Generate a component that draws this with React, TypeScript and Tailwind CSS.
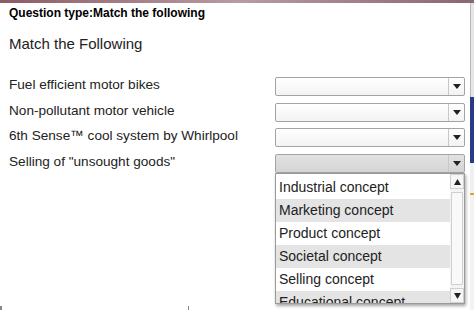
import React from "react";

const labels = [
  "Fuel efficient motor bikes",
  "Non-pollutant motor vehicle",
  "6th Sense™ cool system by Whirlpool",
  'Selling of "unsought goods"',
];

const options = [
  "Industrial concept",
  "Marketing concept",
  "Product concept",
  "Societal concept",
  "Selling concept",
  "Educational concept",
];

function Caret() {
  return (
    <svg width="8" height="5" viewBox="0 0 8 5">
      <path d="M0 0h8L4 5z" fill="#222" />
    </svg>
  );
}

function Select({ active }: { active?: boolean }) {
  return (
    <div
      className={`flex h-[19px] w-[190px] rounded-[2px] border border-[#a3a3a3] ${
        active ? "bg-gradient-to-b from-[#e2e2e2] to-[#d4d4d4]" : "bg-gradient-to-b from-white to-[#f3f3f3]"
      }`}
    >
      <div className="flex-1" />
      <div className="flex w-[16px] items-center justify-center border-l border-[#c8c8c8]">
        <Caret />
      </div>
    </div>
  );
}

function ScrollArrow({ up }: { up?: boolean }) {
  return (
    <div className="flex h-[15px] items-center justify-center border border-[#d0d0d0] bg-[#f6f6f6]">
      <svg width="7" height="6" viewBox="0 0 7 6">
        <path d={up ? "M0 6h7L3.5 0z" : "M0 0h7L3.5 6z"} fill="#222" />
      </svg>
    </div>
  );
}

export default function App() {
  return (
    <div
      className="relative h-[310px] w-[474px] overflow-hidden bg-white text-[#222]"
      style={{ fontFamily: '"Liberation Sans", Arial, sans-serif' }}
    >
      <div className="h-[3px] bg-gradient-to-r from-[#8c5c66] via-[#b89ca2] to-[#8c6670]" />

      <div className="pl-[9px] pt-[3px] text-[12px] font-bold leading-[14px] text-black">
        Question type:Match the following
      </div>
      <div className="pl-[9px] pt-[15px] text-[15px] leading-[17px]">Match the Following</div>

      <div className="mt-[25px] flex flex-col gap-[6.5px] pl-[9px]">
        {labels.map((l, i) => (
          <div key={i} className="flex items-start">
            <div className="-mt-[1px] w-[266px] text-[13.6px] leading-[17px]">{l}</div>
            <Select active={i === 3} />
          </div>
        ))}
      </div>

      <div className="absolute left-[275px] top-[173px] flex h-[131px] w-[190px] border border-[#9a9a9a] bg-white shadow-[1px_2px_3px_rgba(0,0,0,0.35)]">
        <div className="flex-1 overflow-hidden pt-[2px]">
          {options.map((o, i) => (
            <div
              key={o}
              className={`h-[23px] pl-[3px] text-[14px] leading-[23px] ${i % 2 === 1 ? "bg-[#e4e4e4]" : "bg-white"}`}
            >
              {o}
            </div>
          ))}
        </div>
        <div className="flex w-[14px] flex-col bg-[#f4f4f4]">
          <ScrollArrow up />
          <div className="mx-[1px] mt-[3px] h-[93px] rounded-[1px] border border-[#cfcfcf] bg-[#f9f9f9]" />
          <div className="flex-1" />
          <ScrollArrow />
        </div>
      </div>

      <div className="absolute right-0 top-[3px] flex h-[307px] w-[4px] flex-col">
        <div className="h-[94px] border-l border-[#b8b8b8] bg-[#e6e6e6]" />
        <div className="h-[66px] bg-[#2c3a86]" />
        <div className="h-[30px] bg-[#f0f0f0]" />
        <div className="h-[2px] bg-[#e0a040]" />
        <div className="flex-1 bg-[#f2f2f2]" />
      </div>

      <div className="absolute bottom-0 left-0 h-[4px] w-[2px] bg-[#888]" />
      <div className="absolute bottom-0 left-[188px] h-[4px] w-[1px] bg-[#888]" />
    </div>
  );
}
